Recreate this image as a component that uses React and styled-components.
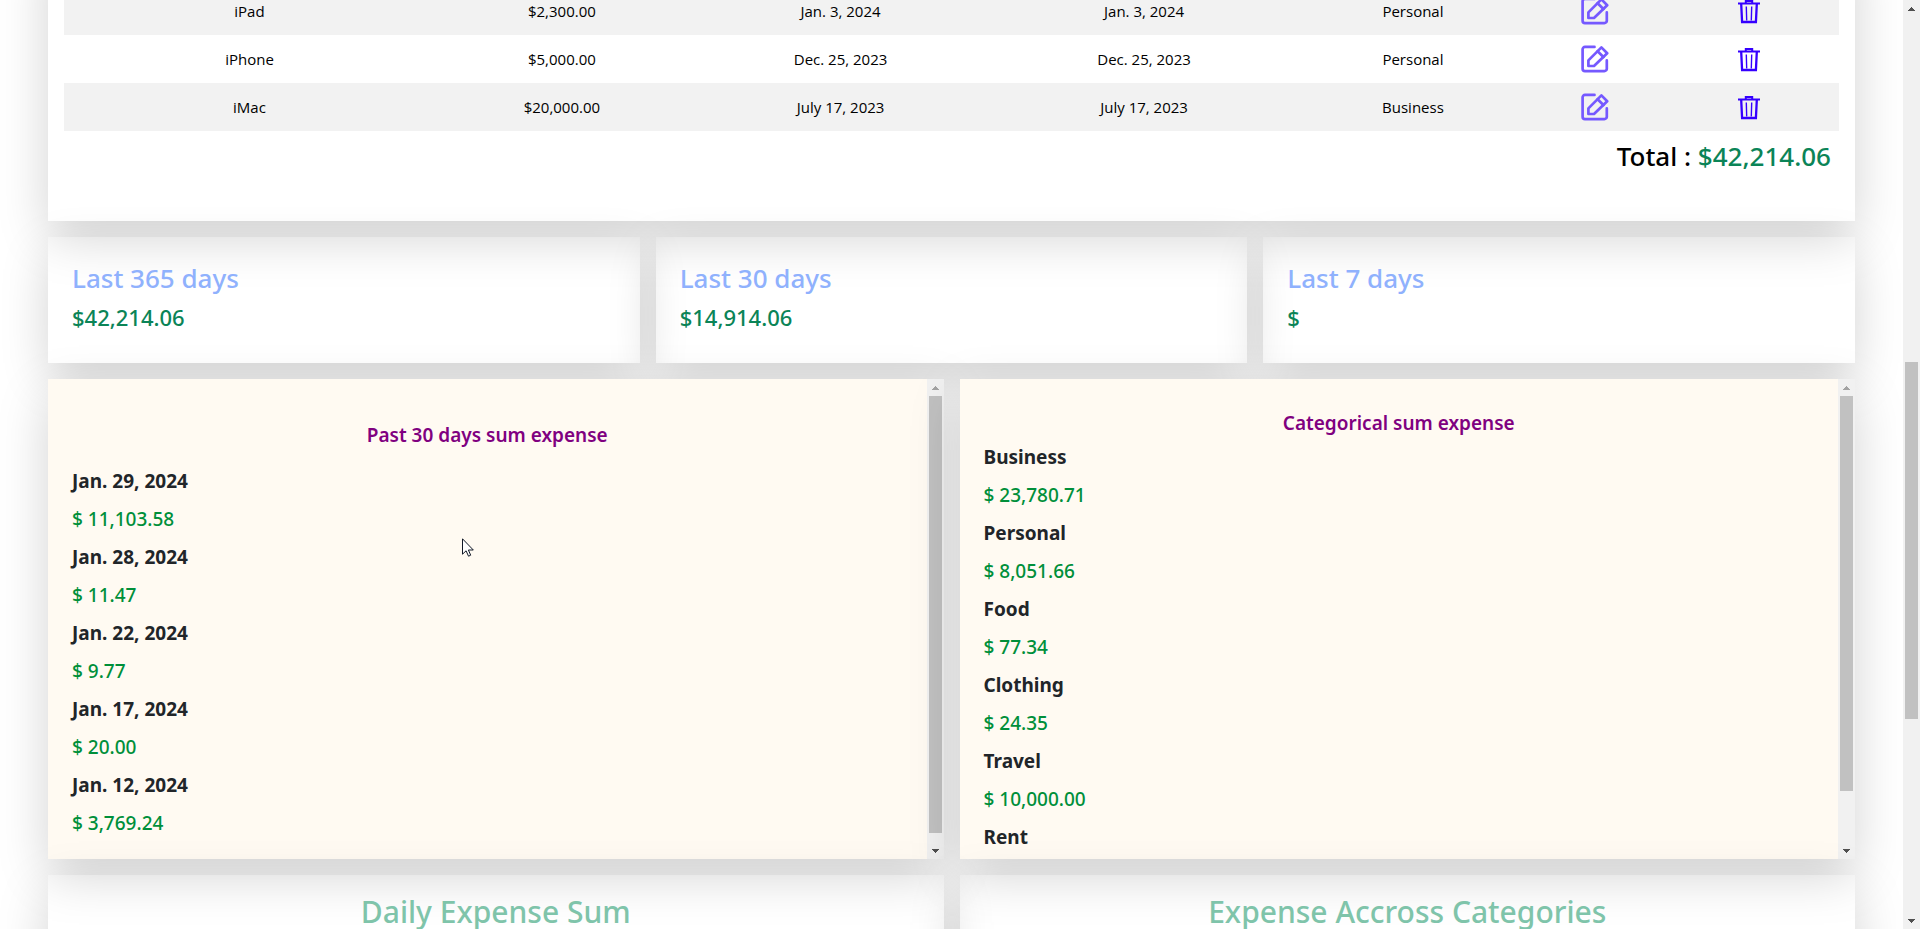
import React from "react";
import styled, { createGlobalStyle } from "styled-components";

const GlobalStyle = createGlobalStyle`
  *, *::before, *::after { box-sizing: border-box; }
  body {
    margin: 0;
    overflow: hidden;
    background: #fff;
    color: #212529;
    font-family: "Noto Sans", "Open Sans", sans-serif;
    font-size: 15px;
  }
`;

const shadow = "0 16px 48px rgba(0, 0, 0, 0.175)";

const Page = styled.div`
  display: flex;
  height: 100vh;
  overflow: hidden;
`;

const Main = styled.main`
  flex: 1;
  min-width: 0;
  overflow: hidden;
  display: flex;
  flex-direction: column;
  gap: 16px;
  padding: 0 48px;

  > * { flex-shrink: 0; }
`;

/* The page is scrolled, so the table card starts above the visible area. */
const TableCard = styled.section`
  margin-top: -61px;
  padding: 48px 16px;
  box-shadow: ${shadow};
`;

const Table = styled.table`
  width: 100%;
  table-layout: fixed;
  border-collapse: collapse;
  color: #000;
  font-family: "Open Sans", "Noto Sans", sans-serif;
`;

const Col = styled.col`
  width: ${(p) => p.$width};
`;

const Row = styled.tr`
  height: 48px;
  &:nth-child(odd) { background: #f2f2f2; }
`;

const Cell = styled.td`
  padding: 0;
  line-height: 24px;
  text-align: center;
  vertical-align: middle;
`;

const IconLink = styled.a`
  display: inline-flex;
  vertical-align: middle;
`;

const IconButton = styled.button`
  display: inline-flex;
  vertical-align: middle;
  padding: 0;
  border: 0;
  background: none;
`;

const Total = styled.h3`
  margin: 8px 8px 0;
  color: #000;
  font-size: 26px;
  font-weight: 500;
  line-height: 34px;
  text-align: right;
`;

const Green = styled.span`
  color: #0b8457;
`;

const Stats = styled.div`
  display: grid;
  grid-template-columns: repeat(3, 1fr);
  gap: 16px;
`;

const StatCard = styled.section`
  padding: 24px 24px 32px;
  box-shadow: ${shadow};
`;

const StatTitle = styled.h3`
  margin: 0 0 8px;
  color: #8fb1fd;
  font-size: 26px;
  font-weight: 500;
  line-height: 34px;
`;

const StatValue = styled.p`
  margin: 0;
  color: #0b8457;
  font-size: 22px;
  font-weight: 500;
  line-height: 28px;
`;

const Halves = styled.div`
  display: grid;
  grid-template-columns: repeat(2, 1fr);
  gap: 16px;
`;

const Panel = styled.section`
  display: flex;
  height: 480px;
  overflow: hidden;
  background: #fffaf2;
  box-shadow: ${shadow};
`;

const PanelBody = styled.div`
  flex: 1;
  overflow: hidden;
  padding: ${(p) => (p.$spacious ? "44px" : "32px")} 24px 0;
`;

const PanelTitle = styled.h5`
  margin: 0 0 ${(p) => (p.$spacious ? "22px" : "10px")};
  color: #800080;
  font-size: 19px;
  font-weight: 600;
  line-height: 24px;
  text-align: center;
`;

const SumList = styled.dl`
  display: flex;
  flex-direction: column;
  gap: 14px;
  margin: 0;
  font-size: 19px;
  line-height: 24px;
`;

const SumLabel = styled.dt`
  font-weight: 700;
`;

const SumValue = styled.dd`
  margin: 0;
  color: #008f3a;
  font-weight: 500;
`;

const ChartCard = styled.section`
  min-height: 400px;
  padding: 18px 24px;
  box-shadow: ${shadow};
`;

const ChartTitle = styled.h2`
  margin: 0;
  color: #7fc4aa;
  font-size: 30px;
  font-weight: 500;
  line-height: 38px;
  text-align: center;
`;

const Bar = styled.div`
  display: flex;
  flex-direction: column;
  flex: none;
  width: 17px;
  background: #f1f1f1;
`;

const Arrow = styled.div`
  display: flex;
  align-items: center;
  justify-content: center;
  height: 17px;
  color: ${(p) => (p.$muted ? "#a3a3a3" : "#505050")};
`;

const Track = styled.div`
  flex: 1;
  display: flex;
  flex-direction: column;
  padding: 0 2px;
`;

const TrackPart = styled.div`
  flex: ${(p) => p.$size} 0 0;
  background: ${(p) => (p.$thumb ? "#c1c1c1" : "transparent")};
`;

const Pointer = styled.svg`
  position: absolute;
  left: 462px;
  top: 538px;
`;

function ScrollBar({ before, thumb, after }) {
  return (
    <Bar aria-hidden="true">
      <Arrow $muted={before === 0}>
        <svg width="7" height="4" viewBox="0 0 7 4" shapeRendering="crispEdges">
          <path d="M3 0h1v1h1v1h1v1h1v1H0V3h1V2h1V1h1z" fill="currentColor" />
        </svg>
      </Arrow>
      <Track>
        <TrackPart $size={before} />
        <TrackPart $size={thumb} $thumb />
        <TrackPart $size={after} />
      </Track>
      <Arrow>
        <svg width="7" height="4" viewBox="0 0 7 4" shapeRendering="crispEdges">
          <path d="M0 0h7v1H6v1H5v1H4v1H3V3H2V2H1V1H0z" fill="currentColor" />
        </svg>
      </Arrow>
    </Bar>
  );
}

function EditIcon() {
  return (
    <svg width="28" height="28" viewBox="0 0 28 28" fill="none" stroke="#7559ff" strokeWidth="2.7" strokeLinecap="round" strokeLinejoin="round">
      <path d="M13.5 1.9H4a2.4 2.4 0 0 0-2.4 2.4v19.4A2.4 2.4 0 0 0 4 26.1h19.4a2.4 2.4 0 0 0 2.4-2.4V15.4" />
      <path d="M7.4 15.4 20.4 2.4l5.8 5.8-13.2 12.8H7.4z" />
      <path d="m16.6 6.2 5.8 5.8" />
    </svg>
  );
}

function TrashIcon() {
  return (
    <svg width="22" height="24" viewBox="0 0 22 24" fill="none" stroke="#3500ff">
      <path d="M0 3.5h22" strokeWidth="2" />
      <path d="M7.8 3.5V1h6.4v2.5" strokeWidth="2" />
      <path d="m3.2 4 .9 18h13.8l.9-18" strokeWidth="2.3" />
      <path d="m8.3 6.5.4 14M13.7 6.5l-.4 14" strokeWidth="1.4" />
    </svg>
  );
}

const columns = ["20.9%", "14.3%", "17.1%", "17.1%", "13.2%", "7.3%", "10.1%"];

const expenses = [
  ["iPad", "$2,300.00", "Jan. 3, 2024", "Jan. 3, 2024", "Personal"],
  ["iPhone", "$5,000.00", "Dec. 25, 2023", "Dec. 25, 2023", "Personal"],
  ["iMac", "$20,000.00", "July 17, 2023", "July 17, 2023", "Business"],
];

const stats = [
  ["Last 365 days", "$42,214.06"],
  ["Last 30 days", "$14,914.06"],
  ["Last 7 days", "$"],
];

const dailySums = [
  ["Jan. 29, 2024", "$ 11,103.58"],
  ["Jan. 28, 2024", "$ 11.47"],
  ["Jan. 22, 2024", "$ 9.77"],
  ["Jan. 17, 2024", "$ 20.00"],
  ["Jan. 12, 2024", "$ 3,769.24"],
];

const categorySums = [
  ["Business", "$ 23,780.71"],
  ["Personal", "$ 8,051.66"],
  ["Food", "$ 77.34"],
  ["Clothing", "$ 24.35"],
  ["Travel", "$ 10,000.00"],
  ["Rent", ""],
];

function SumPanel({ title, sums, spacious, thumb, after }) {
  return (
    <Panel>
      <PanelBody $spacious={spacious}>
        <PanelTitle $spacious={spacious}>{title}</PanelTitle>
        <SumList>
          {sums.map(([label, value]) => (
            <React.Fragment key={label}>
              <SumLabel>{label}</SumLabel>
              {value && <SumValue>{value}</SumValue>}
            </React.Fragment>
          ))}
        </SumList>
      </PanelBody>
      <ScrollBar before={0} thumb={thumb} after={after} />
    </Panel>
  );
}

export default function App() {
  return (
    <Page>
      <GlobalStyle />
      <Main>
        <TableCard>
          <Table>
            <colgroup>
              {columns.map((width, i) => (
                <Col key={i} $width={width} />
              ))}
            </colgroup>
            <tbody>
              {expenses.map((cells) => (
                <Row key={cells[0]}>
                  {cells.map((text, i) => (
                    <Cell key={i}>{text}</Cell>
                  ))}
                  <Cell>
                    <IconLink href="#edit" aria-label={`Edit ${cells[0]}`}>
                      <EditIcon />
                    </IconLink>
                  </Cell>
                  <Cell>
                    <IconButton type="button" aria-label={`Delete ${cells[0]}`}>
                      <TrashIcon />
                    </IconButton>
                  </Cell>
                </Row>
              ))}
            </tbody>
          </Table>
          <Total>
            Total : <Green>$42,214.06</Green>
          </Total>
        </TableCard>

        <Stats>
          {stats.map(([title, value]) => (
            <StatCard key={title}>
              <StatTitle>{title}</StatTitle>
              <StatValue>{value}</StatValue>
            </StatCard>
          ))}
        </Stats>

        <Halves>
          <SumPanel title="Past 30 days sum expense" sums={dailySums} spacious thumb={437} after={9} />
          <SumPanel title="Categorical sum expense" sums={categorySums} thumb={395} after={51} />
        </Halves>

        <Halves>
          <ChartCard>
            <ChartTitle>Daily Expense Sum</ChartTitle>
          </ChartCard>
          <ChartCard>
            <ChartTitle>Expense Accross Categories</ChartTitle>
          </ChartCard>
        </Halves>
      </Main>
      <ScrollBar before={345} thumb={357} after={193} />
      <Pointer width="12" height="19" viewBox="0 0 12 19" aria-hidden="true">
        <path d="M.5.8v15.4l3.6-3.4 2.4 5.4 2.2-1-2.3-5.2h4.9z" fill="#fff" stroke="#111827" />
      </Pointer>
    </Page>
  );
}
